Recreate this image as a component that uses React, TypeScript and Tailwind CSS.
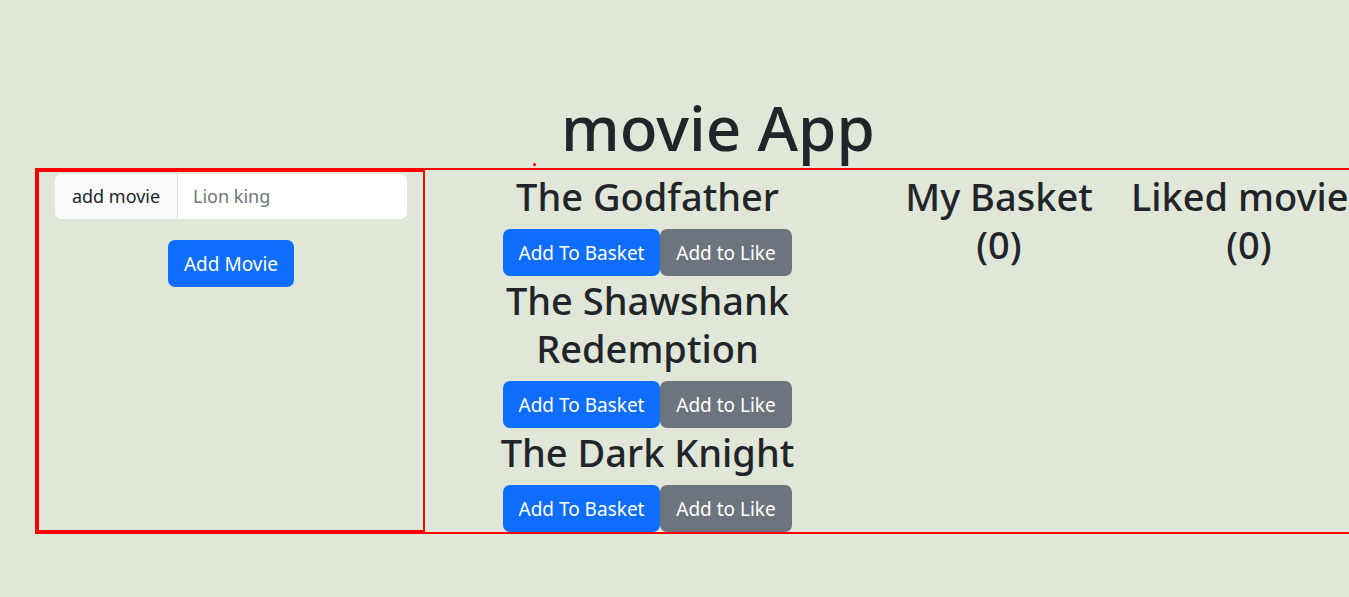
import { useState } from 'react';

const movies = ['The Godfather', 'The Shawshank Redemption', 'The Dark Knight'];

export default function App() {
  const [title, setTitle] = useState('');

  return (
    <div
      className="w-full min-h-[597px] overflow-hidden bg-[#e0e6d8] text-[#212529]"
      style={{ fontFamily: '"Noto Sans", "Open Sans", sans-serif' }}
    >
      <div className="flex items-end pt-[90px] pl-[533px]">
        <span className="mb-[2px] h-[3px] w-[3px] rounded-full bg-[#ff0000]" />
        <h1 className="mb-[4px] ml-[25px] text-[62px] font-medium leading-[1.2]">movie App</h1>
      </div>

      <div className="ml-[35px] flex w-[1341px] border-2 border-[#ff0000]">
        <div className="w-[388px] shrink-0 border-2 border-[#ff0000] px-[16px] pt-[2px]">
          <div className="flex h-[45px] rounded-[7px] bg-white text-[18px]">
            <span className="flex w-[123px] items-center justify-center rounded-l-[7px] border-r border-[#dee2e6] bg-[#f8f9fa]">
              add movie
            </span>
            <input
              value={title}
              onChange={e => setTitle(e.target.value)}
              placeholder="Lion king"
              className="min-w-0 flex-1 rounded-r-[7px] bg-white px-[15px] outline-none placeholder:text-[#6c757d]"
            />
          </div>
          <div className="mt-[21px] flex justify-center">
            <button className="h-[47px] rounded-[7px] bg-[#0d6efd] px-[16px] text-[19px] text-white">
              Add Movie
            </button>
          </div>
        </div>

        <div className="flex w-[449px] shrink-0 flex-col items-center pr-[4px] pt-[2px]">
          {movies.map(m => (
            <div key={m} className="flex flex-col items-center">
              <h2 className="mb-[9px] max-w-[330px] text-center text-[38px] font-medium leading-[48px]">{m}</h2>
              <div className="flex">
                <button className="h-[47px] w-[157px] rounded-[7px] bg-[#0d6efd] text-[19px] text-white">
                  Add To Basket
                </button>
                <button className="h-[47px] w-[132px] rounded-[7px] bg-[#6c757d] text-[19px] text-white">
                  Add to Like
                </button>
              </div>
            </div>
          ))}
        </div>

        <div className="w-[250px] shrink-0 pt-[2px] text-center text-[38px] font-medium leading-[48px]">
          <p>My Basket</p>
          <p>(0)</p>
        </div>
        <div className="w-[250px] shrink-0 whitespace-nowrap pt-[2px] text-center text-[38px] font-medium leading-[48px]">
          <p>Liked movies</p>
          <p>(0)</p>
        </div>
      </div>
    </div>
  );
}
